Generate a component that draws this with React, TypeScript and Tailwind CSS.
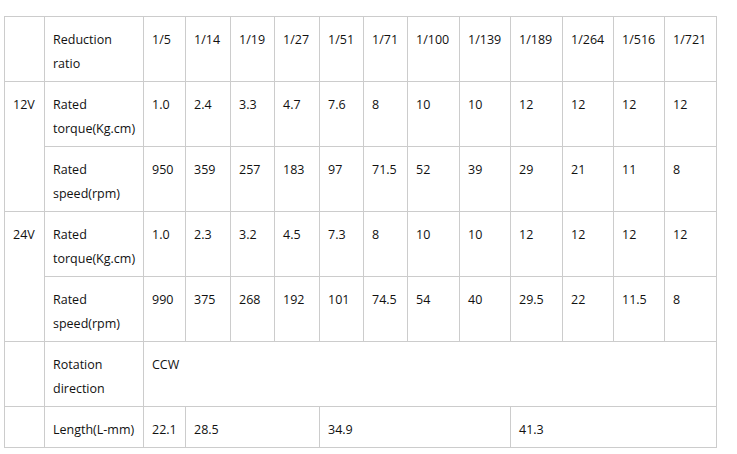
const ratios = ["1/5", "1/14", "1/19", "1/27", "1/51", "1/71", "1/100", "1/139", "1/189", "1/264", "1/516", "1/721"];
const torque12 = ["1.0", "2.4", "3.3", "4.7", "7.6", "8", "10", "10", "12", "12", "12", "12"];
const speed12 = ["950", "359", "257", "183", "97", "71.5", "52", "39", "29", "21", "11", "8"];
const torque24 = ["1.0", "2.3", "3.2", "4.5", "7.3", "8", "10", "10", "12", "12", "12", "12"];
const speed24 = ["990", "375", "268", "192", "101", "74.5", "54", "40", "29.5", "22", "11.5", "8"];

const cell = "border-r border-b border-[#cccccc] pl-2 pt-[11px]";

function Label({ a, b }: { a: string; b?: string }) {
  return (
    <div className={cell}>
      {a}
      {b ? (
        <>
          <br />
          {b}
        </>
      ) : null}
    </div>
  );
}

function Values({ values }: { values: string[] }) {
  return (
    <>
      {values.map((v, i) => (
        <div key={i} className={cell}>
          {v}
        </div>
      ))}
    </>
  );
}

export default function App() {
  return (
    <div className="h-[454px] w-[737px] bg-white pl-1 pt-4 text-[12.5px] leading-[24px] text-[#111]" style={{ fontFamily: '"Open Sans", "Noto Sans", sans-serif' }}>
      <div className="grid w-fit grid-cols-[40px_99px_42px_45px_44px_45px_44px_44px_52px_51px_52px_51px_51px_52px] grid-rows-[65px_65px_65px_65px_65px_65px_41px] border-l border-t border-[#cccccc]">
        <div className={cell}></div>
        <Label a="Reduction" b="ratio" />
        <Values values={ratios} />

        <div className={`${cell} row-span-2`}>12V</div>
        <Label a="Rated" b="torque(Kg.cm)" />
        <Values values={torque12} />
        <Label a="Rated" b="speed(rpm)" />
        <Values values={speed12} />

        <div className={`${cell} row-span-2`}>24V</div>
        <Label a="Rated" b="torque(Kg.cm)" />
        <Values values={torque24} />
        <Label a="Rated" b="speed(rpm)" />
        <Values values={speed24} />

        <div className={cell}></div>
        <Label a="Rotation" b="direction" />
        <div className={`${cell} col-span-12`}>CCW</div>

        <div className={cell}></div>
        <Label a="Length(L-mm)" />
        <div className={cell}>22.1</div>
        <div className={`${cell} col-span-3`}>28.5</div>
        <div className={`${cell} col-span-4`}>34.9</div>
        <div className={`${cell} col-span-4`}>41.3</div>
      </div>
    </div>
  );
}
